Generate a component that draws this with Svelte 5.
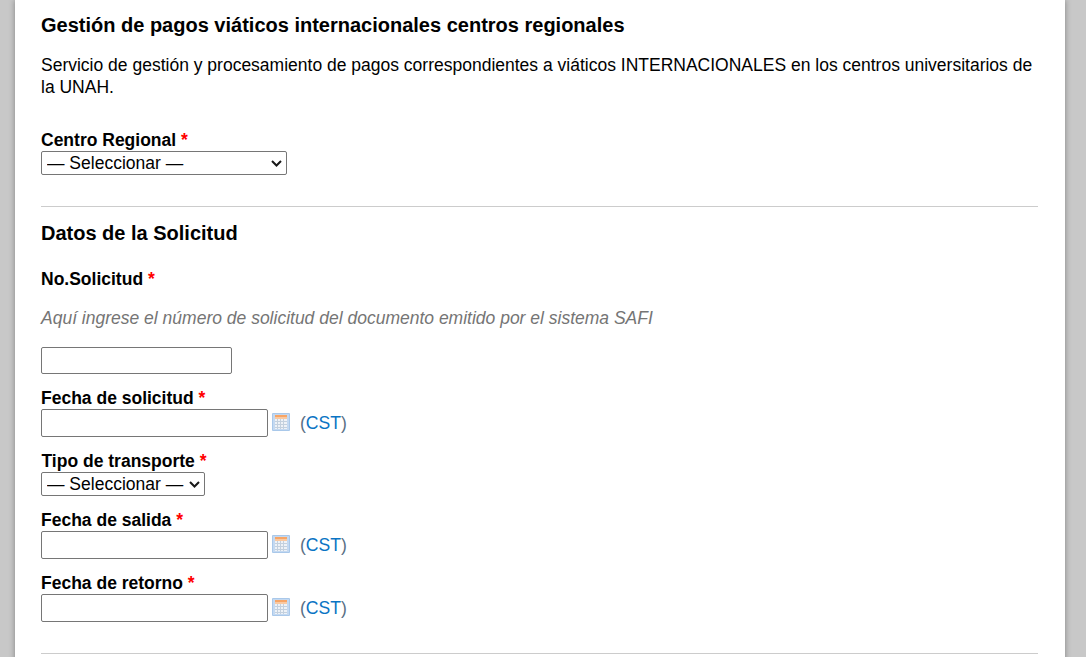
<script>
  const dateFields = {
    solicitud: 'Fecha de solicitud',
    salida: 'Fecha de salida',
    retorno: 'Fecha de retorno'
  };
</script>

{#snippet dateRow(label)}
  <div class="field date">
    <div class="label">{label} <span class="req">*</span></div>
    <div class="date-row">
      <input class="date-input" type="text" />
      <svg class="cal" width="18" height="18" viewBox="0 0 18 18" aria-hidden="true">
        <rect x="0" y="0" width="18" height="18" rx="1" fill="#a9c8ea" />
        <rect x="1" y="1" width="16" height="16" fill="#c4d9f1" />
        <rect x="3" y="2" width="12" height="2" fill="#f7a566" />
        <rect x="3" y="4" width="12" height="2" fill="#f9c9a2" />
        <rect x="3" y="6" width="12" height="10" fill="#eef2f7" />
        <path d="M3 8.5h12M3 11.5h12M3 14.5h12M5.5 6v10M8.5 6v10M11.5 6v10" stroke="#c3d0de" stroke-width="1" fill="none" />
      </svg>
      <span class="tz">(<span class="tz-link">CST</span>)</span>
    </div>
  </div>
{/snippet}

<div class="page">
  <main class="card">
    <h2 class="title">Gestión de pagos viáticos internacionales centros regionales</h2>
    <p class="desc">Servicio de gestión y procesamiento de pagos correspondientes a viáticos INTERNACIONALES en los centros universitarios de la UNAH.</p>

    <div class="field regional">
      <div class="label">Centro Regional <span class="req">*</span></div>
      <select class="select wide"><option>— Seleccionar —</option></select>
    </div>

    <hr class="rule first" />
    <h3 class="section">Datos de la Solicitud</h3>

    <div class="label nosol">No.Solicitud <span class="req">*</span></div>
    <p class="hint">Aquí ingrese el número de solicitud del documento emitido por el sistema SAFI</p>
    <input class="text-input" type="text" />

    {@render dateRow(dateFields.solicitud)}

    <div class="field transport">
      <div class="label">Tipo de transporte <span class="req">*</span></div>
      <select class="select narrow"><option>— Seleccionar —</option></select>
    </div>

    {@render dateRow(dateFields.salida)}
    {@render dateRow(dateFields.retorno)}

    <hr class="rule last" />
  </main>
</div>

<style>
  :global(body) {
    margin: 0;
    background: #c8c8c8;
    overflow: hidden;
  }
  .page {
    height: 657px;
    overflow: hidden;
    padding: 0 21px 0 15px;
    font-family: "Liberation Sans", Arial, sans-serif;
    color: #000;
  }
  .card {
    background: #fff;
    box-shadow: 0 0 6px rgba(0, 0, 0, 0.35);
    padding: 13px 27px 0 26px;
    height: 700px;
  }
  .title {
    margin: 0;
    font-size: 20px;
    line-height: 24px;
    font-weight: bold;
  }
  .desc {
    margin: 17px 0 0;
    font-size: 17.5px;
    line-height: 22px;
  }
  .label {
    font-size: 17.5px;
    line-height: 20px;
    font-weight: bold;
  }
  .req { color: #f00; }
  .regional { margin-top: 32px; }
  .select {
    display: block;
    box-sizing: border-box;
    margin-top: 1px;
    font-family: inherit;
    font-size: 17.5px;
    height: 24px;
    color: #000;
    border: 1px solid #767676;
    border-radius: 2px;
    padding: 0 0 0 5px;
    appearance: none;
    background: #fff url("data:image/svg+xml,%3Csvg xmlns='http://www.w3.org/2000/svg' width='11' height='7' viewBox='0 0 11 7'%3E%3Cpath d='M1 1l4.5 4.5L10 1' fill='none' stroke='%23181818' stroke-width='2'/%3E%3C/svg%3E") no-repeat right 4px center;
  }
  .wide { width: 246px; }
  .narrow { width: 164px; }
  .rule {
    border: 0;
    border-top: 1px solid #ccc;
    margin: 0;
  }
  .first { margin-top: 31px; }
  .section {
    margin: 14px 0 0;
    font-size: 20px;
    line-height: 24px;
    font-weight: bold;
  }
  .nosol { margin-top: 24px; }
  .hint {
    margin: 19px 0 0;
    font-size: 17.5px;
    line-height: 20px;
    font-style: italic;
    color: #757575;
  }
  .text-input {
    display: block;
    box-sizing: border-box;
    width: 191px;
    height: 27px;
    margin-top: 19px;
    border: 1px solid #767676;
    border-radius: 2px;
    padding: 0;
  }
  .field.date { margin-top: 14px; }
  .date-row {
    display: flex;
    align-items: center;
    height: 28px;
    margin-top: 1px;
  }
  .date-input {
    box-sizing: border-box;
    width: 227px;
    height: 28px;
    border: 1px solid #767676;
    border-radius: 2px;
    padding: 0;
  }
  .cal {
    margin-left: 4px;
    margin-top: -2px;
  }
  .tz {
    margin-left: 10px;
    font-size: 17.6px;
    color: #5a6f85;
  }
  .tz-link { color: #0a74c4; }
  .transport { margin-top: 14px; }
  .transport .label { padding-left: 0.5px; }
  .last { margin-top: 31px; }
</style>
